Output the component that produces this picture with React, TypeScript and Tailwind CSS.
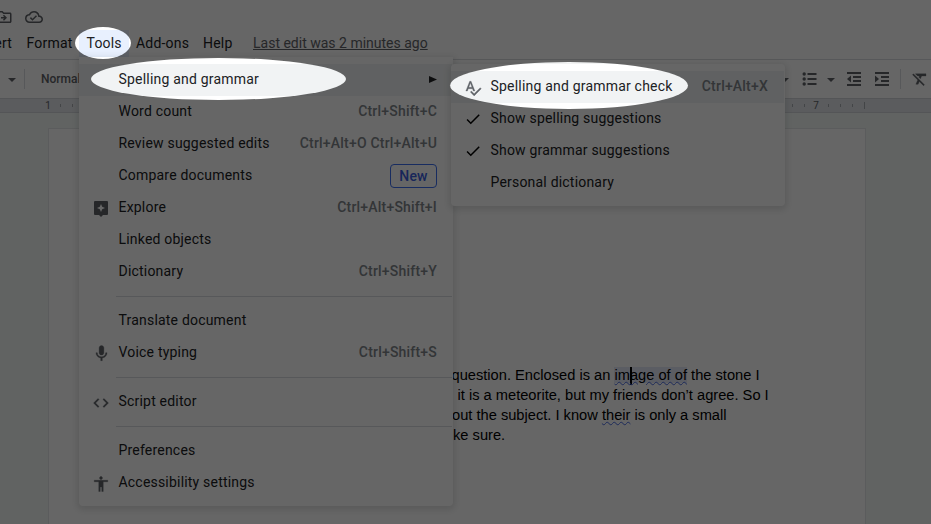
import type { ReactNode } from "react";
import {
  MdAccessibility,
  MdCheck,
  MdCode,
  MdFormatClear,
  MdMic,
  MdOutlineCloudDone,
  MdOutlineDriveFileMove,
  MdSpellcheck,
} from "react-icons/md";

const SANS = "font-['Roboto',sans-serif]";

// Thickens an icon's shape while leaving out its transparent bounding box.
const HEAVY = "shrink-0 stroke-[#5f6368] stroke-[0.4] [&>path[fill=none]]:hidden";

function Caret() {
  return (
    <svg width="8" height="4" viewBox="0 0 8 4" className="shrink-0 fill-[#5f6368]">
      <path d="M0 0h8L4 4z" />
    </svg>
  );
}

function BulletsIcon() {
  return (
    <svg width="18" height="18" viewBox="0 0 18 18" className="shrink-0 fill-[#5f6368]">
      <path d="M6.5 3h9v2h-9zM6.5 8h9v2h-9zM6.5 13h9v2h-9z" />
      <circle cx="3.2" cy="4" r="1.7" />
      <circle cx="3.2" cy="9" r="1.7" />
      <circle cx="3.2" cy="14" r="1.7" />
    </svg>
  );
}

function IndentIcon({ arrow }: { arrow: string }) {
  return (
    <svg width="14" height="14" viewBox="0 0 14 14" className="shrink-0 fill-[#5f6368]">
      <path d="M0 0h14v2H0zM6 4h8v2H6zM6 8h8v2H6zM0 12h14v2H0z" />
      <path d={arrow} />
    </svg>
  );
}

function ExploreIcon() {
  return (
    <svg width="14" height="17" viewBox="0 0 14 17" className="shrink-0 fill-[#5f6368]">
      <path
        fillRule="evenodd"
        d="M1 1h12a1 1 0 0 1 1 1v12a1 1 0 0 1-1 1H9l-2 2-2-2H1a1 1 0 0 1-1-1V2a1 1 0 0 1 1-1zM7 4L5.800 6.800 3 8l2.800 1.200L7 12l1.200-2.800L11 8 8.200 6.800z"
      />
    </svg>
  );
}

type ItemProps = {
  label: string;
  icon?: ReactNode;
  right?: ReactNode;
  active?: boolean;
};

function Item({ label, icon, right, active }: ItemProps) {
  return (
    <div className={`flex h-8 items-center pr-[15px] ${active ? "bg-[#f1f3f4]" : ""}`}>
      <span className="flex w-[39.5px] shrink-0 items-center justify-center pl-[5px] pt-px text-[#5f6368]">
        {icon}
      </span>
      <span className="-mt-[2px] grow text-sm tracking-[0.2px] whitespace-nowrap text-[#202124]">
        {label}
      </span>
      {right}
    </div>
  );
}

function Keys({ children }: { children: string }) {
  return (
    <span className="-mt-[2px] text-sm font-medium tracking-[0.2px] whitespace-nowrap text-[#80868b]">
      {children}
    </span>
  );
}

function Separator() {
  return <div className="my-2 ml-[37px] h-px bg-[#dadce0]" />;
}

function Header() {
  return (
    <header className="h-[59px] shrink-0 bg-white">
      <div className="-ml-[5px] flex h-[34px] items-center gap-3 text-[#5f6368]">
        <MdOutlineDriveFileMove size={18} />
        <MdOutlineCloudDone size={18} />
      </div>
      <nav className="flex h-[18px] items-center text-sm tracking-[0.2px] whitespace-nowrap text-[#202124]">
        <span className="-ml-[25px] w-[51.5px] shrink-0">Insert</span>
        <span className="w-[109.5px] shrink-0">Format</span>
        <span className="w-[67px] shrink-0">Add-ons</span>
        <span className="w-[50px] shrink-0">Help</span>
        <span className="tracking-normal text-[#5f6368] underline">Last edit was 2 minutes ago</span>
      </nav>
    </header>
  );
}

function Toolbar() {
  return (
    <div className="flex h-[39px] shrink-0 items-center border-t border-[#dadce0] bg-white text-[#5f6368]">
      <div className="ml-2 pt-px">
        <Caret />
      </div>
      <div className="ml-2 h-5 w-px bg-[#dadce0]" />
      <span className="ml-4 w-[740px] text-xs font-medium">Normal</span>
      <div className="flex w-[20px] shrink-0 pt-px">
        <Caret />
      </div>
      <BulletsIcon />
      <div className="ml-[8px] shrink-0 pt-px">
        <Caret />
      </div>
      <div className="ml-3 flex shrink-0 gap-[14px]">
        <IndentIcon arrow="M4 3.500v7L0 7z" />
        <IndentIcon arrow="M0 3.500v7L4 7z" />
      </div>
      <div className="ml-[11px] h-5 w-px shrink-0 bg-[#dadce0]" />
      <div className="ml-[10px] shrink-0">
        <MdFormatClear size={18} className={HEAVY} />
      </div>
    </div>
  );
}

const TICKS = Array.from({ length: 69 }, (_, i) => i);

function Ruler() {
  return (
    <div className="flex h-[15px] shrink-0 items-center border-y border-[#d2d5da] bg-[#e4e7eb] pl-[42px]">
      {TICKS.map((i) => {
        // Only the labels beside the open menus are visible.
        const label = i === 0 ? "1" : i === 64 ? "7" : "";
        return (
          <span key={i} className="flex w-3 shrink-0 justify-center text-[10px] leading-3 text-[#5f6368]">
            {label || <span className={`w-px bg-[#a9adb2] ${i === 68 ? "h-[7px]" : "h-[3px]"}`} />}
          </span>
        );
      })}
    </div>
  );
}

const WAVY =
  "underline decoration-[#4a6be0] decoration-wavy decoration-1 underline-offset-1";

function Page() {
  return (
    <main className="flex min-h-0 grow justify-start bg-[#f3f8f6] pt-[15px] pl-12">
      <div className="w-[818px] shrink-0 border border-b-0 border-[#e4e7e8] bg-white pt-[236px] font-['Liberation_Sans',Arial,sans-serif] text-[14.667px] leading-5 whitespace-pre text-black">
        <p className="pl-[402.5px]">
          question. Enclosed is an{" "}
          <span className="bg-[#e4e9f8]">
            <span className={WAVY}>im</span>
            <span className="-mr-[2px] inline-block h-[18px] w-[2px] bg-black align-middle" />
            <span className={WAVY}>age of of</span>
          </span>{" "}
          the stone I
        </p>
        <p className="pl-[408.5px]">it is a meteorite, but my friends don’t agree. So I</p>
        <p className="pl-[403px]">
          out the subject. I know <span className={WAVY}>their</span> is only a small
        </p>
        <p className="pl-[404px]">ke sure.</p>
      </div>
    </main>
  );
}

function ToolsMenu() {
  return (
    <div className="absolute top-[57px] left-[79px] h-[449px] w-[374px] rounded-b bg-white pt-[7px] pr-px shadow-[0_2px_6px_2px_rgba(60,64,67,0.15)]">
      <Item
        active
        label="Spelling and grammar"
        right={
          <svg width="8" height="7" viewBox="0 0 8 7" className="-mt-px fill-[#202124]">
            <path d="M0 0L8 3.5L0 7z" />
          </svg>
        }
      />
      <Item label="Word count" right={<Keys>Ctrl+Shift+C</Keys>} />
      <Item label="Review suggested edits" right={<Keys>Ctrl+Alt+O Ctrl+Alt+U</Keys>} />
      <Item
        label="Compare documents"
        right={
          <span className="flex h-6 w-[47px] items-center justify-center rounded border border-[#3c6ff0] text-sm font-medium tracking-[0.2px] text-[#3c5fe0]">
            New
          </span>
        }
      />
      <Item label="Explore" icon={<ExploreIcon />} right={<Keys>Ctrl+Alt+Shift+I</Keys>} />
      <Item label="Linked objects" />
      <Item label="Dictionary" right={<Keys>Ctrl+Shift+Y</Keys>} />
      <Separator />
      <Item label="Translate document" />
      <Item
        label="Voice typing"
        icon={<MdMic size={19} className={HEAVY} />}
        right={<Keys>Ctrl+Shift+S</Keys>}
      />
      <Separator />
      <Item label="Script editor" icon={<MdCode size={18} className={HEAVY} />} />
      <Separator />
      <Item label="Preferences" />
      <Item label="Accessibility settings" icon={<MdAccessibility size={18} className={HEAVY} />} />
    </div>
  );
}

function SpellingMenu() {
  return (
    <div className="absolute top-[64px] left-[451px] h-[142px] w-[334px] rounded bg-white py-[7px] pr-px shadow-[0_2px_6px_2px_rgba(60,64,67,0.15)]">
      <Item
        active
        label="Spelling and grammar check"
        icon={<MdSpellcheck size={18} className={HEAVY} />}
        right={
          <span className="mr-px flex">
            <Keys>Ctrl+Alt+X</Keys>
          </span>
        }
      />
      <Item label="Show spelling suggestions" icon={<MdCheck size={18} className="-mt-px text-black" />} />
      <Item label="Show grammar suggestions" icon={<MdCheck size={18} className="-mt-px text-black" />} />
      <Item label="Personal dictionary" />
    </div>
  );
}

// Dimming layer with three elliptical openings that highlight the click path.
function Spotlight() {
  return (
    <svg className="absolute inset-0" width="931" height="524" viewBox="0 0 931 524">
      <mask id="holes">
        <rect width="931" height="524" fill="#fff" />
        <ellipse cx="103" cy="43" rx="28" ry="16" />
        <ellipse cx="218.5" cy="79" rx="127.5" ry="21" />
        <ellipse cx="569" cy="85.5" rx="119" ry="23.5" />
      </mask>
      <rect width="931" height="524" fillOpacity="0.6" mask="url(#holes)" />
    </svg>
  );
}

export default function App() {
  return (
    <div className={`relative flex h-[524px] w-[931px] flex-col overflow-hidden bg-white ${SANS}`}>
      <Header />
      <Toolbar />
      <Ruler />
      <Page />
      <div className="absolute top-[30px] left-[79px] flex h-[27px] w-[50px] items-center bg-[#e8f0fe] pl-[7.5px] text-sm tracking-[0.2px] text-[#202124]">
        <span className="-mt-[1px]">Tools</span>
      </div>
      <ToolsMenu />
      <SpellingMenu />
      <Spotlight />
    </div>
  );
}
